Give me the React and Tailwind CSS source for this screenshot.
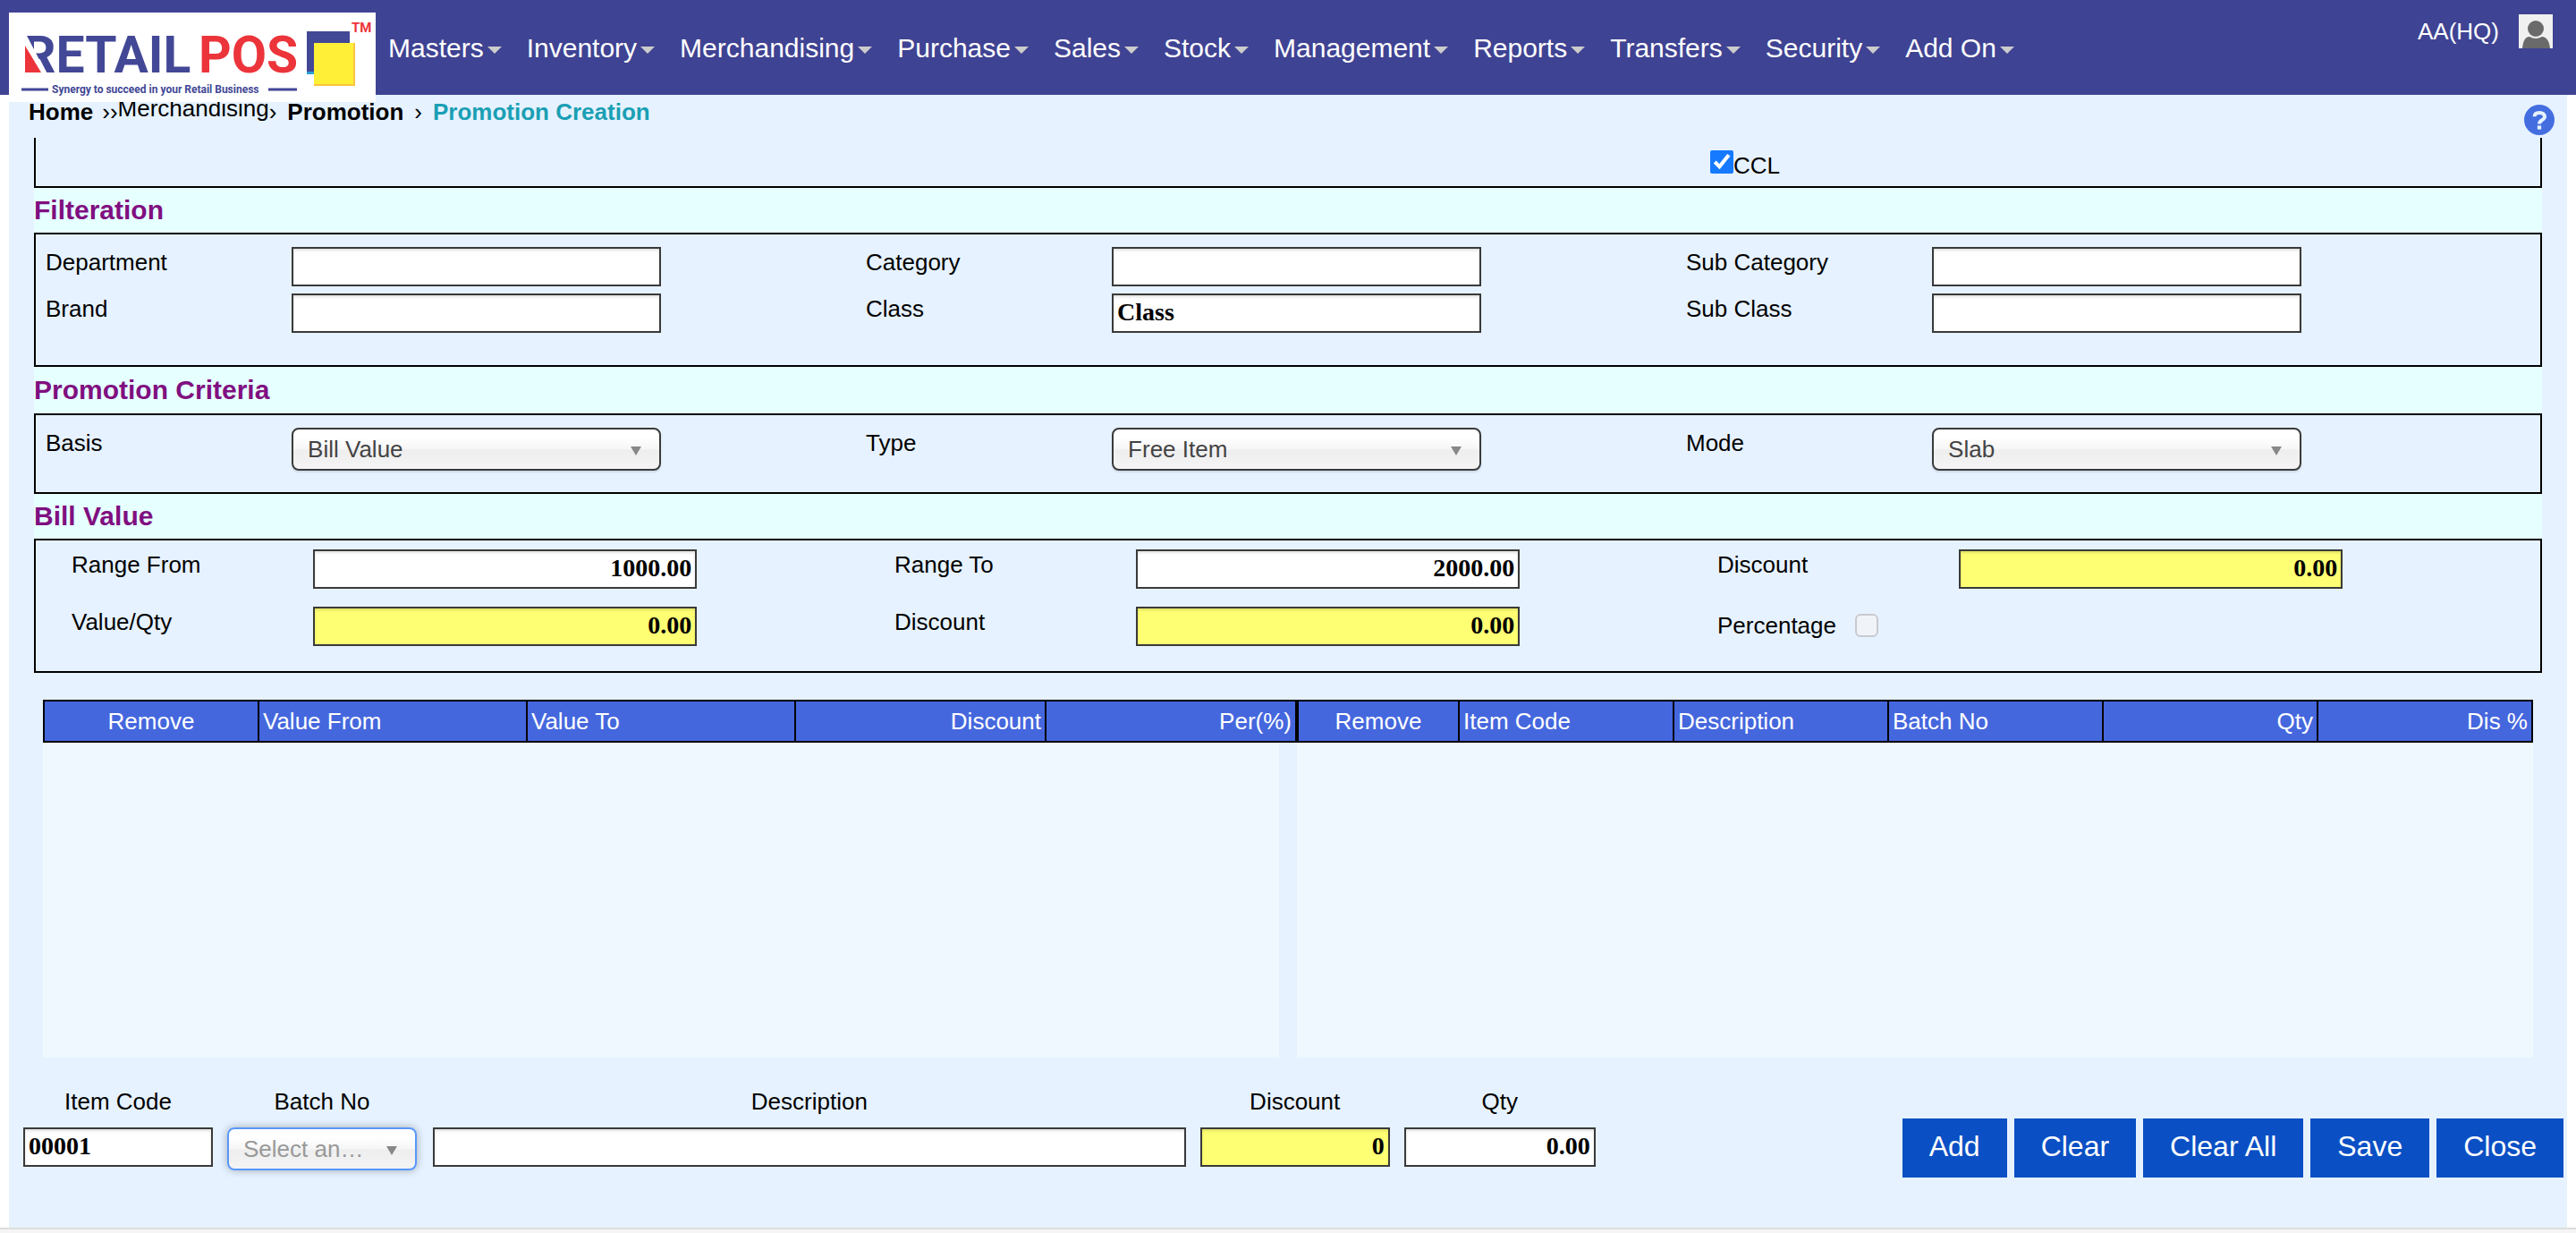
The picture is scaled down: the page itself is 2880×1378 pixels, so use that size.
import React from "react";

const MENU = [
  "Masters", "Inventory", "Merchandising", "Purchase", "Sales", "Stock",
  "Management", "Reports", "Transfers", "Security", "Add On",
];

function Logo() {
  return (
    <svg viewBox="0 0 410 100" className="h-[100px] w-[410px]" role="img" aria-label="Retail POS">
      <rect width="410" height="100" fill="#fff" />
      <g fontFamily="Roboto, sans-serif" fontWeight="700">
        <text x="16" y="67" fontSize="57" fill="#424796">RETAIL</text>
        <text x="212" y="67" fontSize="57" fill="#ec343b">POS</text>
        <text x="383" y="22" fontSize="15" fill="#ec343b">TM</text>
        <text x="48" y="90" fontSize="12" fill="#424796">Synergy to succeed in your Retail Business</text>
      </g>
      <path d="M15 24H19L42 68H15Z" fill="#fff" />
      <path d="M18 37V67H36Z" fill="#ec343b" />
      <path d="M14 86H44M290 86H322" stroke="#424796" strokeWidth="3" />
      <path d="M333 21H381V36H341V69H333Z" fill="#424796" />
      <path d="M333 66H341V69H333Z" fill="#2a9fd8" />
      <rect x="341" y="34" width="46" height="48" fill="#ffef37" />
      <path d="M341 81H386V34" stroke="#f9c440" strokeWidth="2" fill="none" />
    </svg>
  );
}

function Header() {
  return (
    <header className="relative z-10 flex h-[106px] items-start bg-[#3f4393] pl-[10px] pr-[26px] text-white">
      <a href="#home" className="mt-[14px] block shrink-0"><Logo /></a>
      <nav className="ml-[14px] mt-[34px] flex flex-1 gap-7 text-[30px] leading-10">
        {MENU.map((m) => (
          <a key={m} href={"#" + m} className="flex items-center gap-1 whitespace-nowrap">
            {m}
            <svg viewBox="0 0 16 8" className="mt-1 h-2 w-4"><path d="M0 0H16L8 8Z" fill="#ccc" /></svg>
          </a>
        ))}
      </nav>
      <span className="mt-[18px] text-[26px] leading-[34px]">AA(HQ)</span>
      <svg viewBox="0 0 38 38" className="ml-[22px] mt-4 size-[38px]">
        <rect width="38" height="38" fill="#f0f0f0" />
        <circle cx="19" cy="16" r="9" fill="#6a6a6a" />
        <path d="M4 38C5 30 7 25 12 25Q19 29 26 25C31 25 34 30 35 38Z" fill="#6a6a6a" />
      </svg>
    </header>
  );
}

function Breadcrumb() {
  return (
    <div className="flex h-12 items-start justify-between pl-[22px] pr-[14px]">
      <nav aria-label="Breadcrumb" className="flex pt-[2px] text-[26px] leading-[34px]">
        <a href="#home" className="font-bold">Home</a>
        <span className="ml-[10px]">››</span>
        <a href="#merchandising" className="-mt-1">Merchandising</a>
        <span>›</span>
        <a href="#promotion" className="ml-3 font-bold">Promotion</a>
        <span className="ml-3">›</span>
        <a href="#creation" className="ml-3 font-bold text-[#1a9fb4]">Promotion Creation</a>
      </nav>
      <button aria-label="Help" className="mt-[11px] size-[34px]">
        <svg viewBox="0 0 24 24" className="size-full">
          <circle cx="12" cy="12" r="12" fill="#446ee0" />
          <path d="M8.200 9.400C8.200 7.300 9.900 6.300 12.200 6.300s4 1.200 4 3.200c0 2.600-4.200 2.700-4.200 5.600" fill="none" stroke="#e6f2ff" strokeWidth="2.800" />
          <rect x="10.500" y="16.500" width="3" height="3" fill="#e6f2ff" />
        </svg>
      </button>
    </div>
  );
}

function Heading({ children, className = "h-[50px]" }) {
  return (
    <h2 className={"flex items-center bg-[#e6ffff] text-[30px] font-bold leading-10 text-[#800f80] " + className}>
      {children}
    </h2>
  );
}

const BOX = "h-11 border-2 border-[#3a3a3a] px-1 pb-[2px] font-['Liberation_Serif',serif] text-[28px] font-bold shadow-[inset_0_2px_3px_rgba(0,0,0,0.12)] outline-none ";

function TextBox({ id, value = "", className = "", yellow }) {
  return (
    <input id={id} type="text" defaultValue={value}
      className={BOX + (yellow ? "bg-[#ffff73] " : "bg-white ") + className} />
  );
}

function Select({ id, value, className = "", focused }) {
  return (
    <span className={"relative block " + className}>
      <select id={id} defaultValue={value}
        className={"block h-12 w-full appearance-none rounded-lg border-2 bg-linear-[180deg,#fff_20%,#f6f6f6_50%,#eee_52%,#f4f4f4_100%] pl-4 pr-12 text-[26px] outline-none " +
          (focused ? "border-[#5897fb] text-[#999] shadow-[0_0_10px_rgba(0,0,0,0.3)]" : "border-[#3a3a3a] text-[#444] shadow-[0_2px_2px_rgba(0,0,0,0.1)]")}>
        <option>{value}</option>
      </select>
      <svg viewBox="0 0 12 10" className="pointer-events-none absolute right-[22px] top-[21px] h-[10px] w-3">
        <path d="M0 0H12L6 10Z" fill="#888" />
      </svg>
    </span>
  );
}

function Field({ label, id, labelClass, children }) {
  return (
    <div className="flex items-start">
      <label htmlFor={id} className={"shrink-0 text-[26px] leading-[34px] " + labelClass}>{label}</label>
      {children}
    </div>
  );
}

const FILTERS = [
  ["Department", ""], ["Category", ""], ["Sub Category", ""],
  ["Brand", ""], ["Class", "Class"], ["Sub Class", ""],
];
const CRITERIA = [["Basis", "Bill Value"], ["Type", "Free Item"], ["Mode", "Slab"]];
const VALUES = [
  ["Range From", "1000.00", false], ["Range To", "2000.00", false], ["Discount", "0.00", true],
  ["Value/Qty", "0.00", true], ["Discount", "0.00", true],
];

const LEFT_COLS = [
  ["Remove", 242, "text-center"], ["Value From", 300, "text-left"], ["Value To", 300, "text-left"],
  ["Discount", 280, "text-right"], ["Per(%)", 280, "text-right"],
];
const RIGHT_COLS = [
  ["Remove", 182, "text-center"], ["Item Code", 240, "text-left"], ["Description", 240, "text-left"],
  ["Batch No", 240, "text-left"], ["Qty", 240, "text-right"], ["Dis %", 240, "text-right"],
];

function Grid({ cols, bodyClass = "" }) {
  return (
    <div>
      <table className="w-full table-fixed border-separate border-spacing-0">
        <colgroup>{cols.map(([n, w]) => <col key={n} style={{ width: w }} />)}</colgroup>
        <thead>
          <tr>
            {cols.map(([n, , align]) => (
              <th key={n} className={"h-12 border-y-2 border-r-2 border-black bg-[#4567de] px-1 text-[26px] font-normal leading-10 text-white first:border-l-2 " + align}>{n}</th>
            ))}
          </tr>
        </thead>
      </table>
      <div className={"h-[352px] bg-[#f0f8ff] " + bodyClass} />
    </div>
  );
}

function Entry({ label, id, className, children }) {
  return (
    <div className={"flex flex-col " + className}>
      <label htmlFor={id} className="mb-3 text-center text-[26px] leading-[34px]">{label}</label>
      {children}
    </div>
  );
}

export default function App() {
  return (
    <div className="min-h-screen bg-white font-['Liberation_Sans',Arial,sans-serif] text-black">
      <Header />
      <main className="mx-[10px] bg-[#e6f2ff]">
        <Breadcrumb />
        <div className="px-7">
          <div className="grid h-14 grid-cols-[1872fr_928fr] items-start border-x-2 border-b-2 border-black pt-[14px]">
            <label className="col-start-2 flex items-start text-[26px] leading-[34px]">
              <input type="checkbox" defaultChecked className="size-[26px] accent-[#157aff]" />CCL
            </label>
          </div>

          <Heading>Filteration</Heading>
          <section className="grid grid-cols-3 gap-y-2 border-2 border-black pb-9 pl-[11px] pr-[38px] pt-[14px]">
            {FILTERS.map(([l, v]) => (
              <Field key={l} label={l} id={l} labelClass="w-[30%]">
                <TextBox id={l} value={v} className="w-[45%]" />
              </Field>
            ))}
          </section>

          <Heading className="h-[52px]">Promotion Criteria</Heading>
          <section className="grid grid-cols-3 border-2 border-black pb-6 pl-[11px] pr-[38px] pt-[14px]">
            {CRITERIA.map(([l, v]) => (
              <Field key={l} label={l} id={l} labelClass="w-[30%]">
                <Select id={l} value={v} className="w-[45%]" />
              </Field>
            ))}
          </section>

          <Heading>Bill Value</Heading>
          <section className="grid grid-cols-3 gap-y-5 border-2 border-black pb-7 pl-[40px] pt-[10px]">
            {VALUES.map(([l, v, y], i) => (
              <Field key={i} label={l} id={"value" + i} labelClass="w-[270px]">
                <TextBox id={"value" + i} value={v} yellow={y} className="w-7/15 text-right" />
              </Field>
            ))}
            <div className="flex items-start pt-1">
              <label htmlFor="percentage" className="text-[26px] leading-[34px]">Percentage</label>
              <input id="percentage" type="checkbox" disabled className="ml-[21px] mt-1 size-[26px] appearance-none rounded-md border-2 border-[#c8cad0] bg-[#f0f3f8]" />
            </div>
          </section>

          <section className="grid grid-cols-[1402fr_1382fr] px-[10px] pt-[30px]">
            <Grid cols={LEFT_COLS} bodyClass="mr-5" />
            <Grid cols={RIGHT_COLS} />
          </section>
        </div>

        <div className="flex items-start pb-14 pl-4 pr-1 pt-8">
          <div className="flex flex-1 gap-4">
            <Entry label="Item Code" id="itemCode" className="w-[212px]">
              <TextBox id="itemCode" value="00001" />
            </Entry>
            <Entry label="Batch No" id="batchNo" className="w-[212px]">
              <Select id="batchNo" value="Select an…" focused />
            </Entry>
            <Entry label="Description" id="description" className="ml-[2px] flex-1">
              <TextBox id="description" />
            </Entry>
            <Entry label="Discount" id="itemDiscount" className="w-[212px]">
              <TextBox id="itemDiscount" value="0" yellow className="text-right" />
            </Entry>
            <Entry label="Qty" id="qty" className="w-[214px]">
              <TextBox id="qty" value="0.00" className="text-right" />
            </Entry>
          </div>
          <div className="ml-[343px] mt-9 flex gap-2">
            {["Add", "Clear", "Clear All", "Save", "Close"].map((b) => (
              <button key={b} className="bg-[#0b4fc4] px-[30px] pb-[17px] pt-[13px] text-[32px] leading-9 text-white">{b}</button>
            ))}
          </div>
        </div>
      </main>
      <footer className="h-[6px] border-t-2 border-[#ddd] bg-[#f5f5f5]" />
    </div>
  );
}
